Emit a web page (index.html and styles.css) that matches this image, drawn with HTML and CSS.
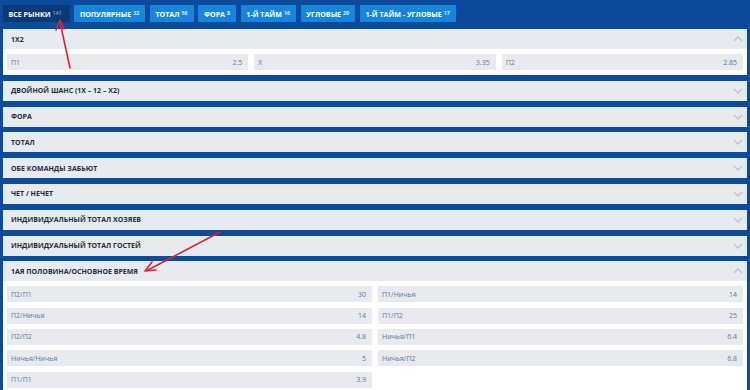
FILE: index.html
```html
<!DOCTYPE html>
<html lang="ru">
<head>
  <meta charset="UTF-8" />
  <meta name="viewport" content="width=device-width, initial-scale=1.0" />
  <title>Рынки</title>
  <link rel="stylesheet" href="styles.css">
</head>
<body>
  <div class="page">
    <nav class="tabs">
      <a class="tab active">Все рынки <sup>141</sup></a>
      <a class="tab">Популярные <sup>32</sup></a>
      <a class="tab">Тотал <sup>56</sup></a>
      <a class="tab">Фора <sup>8</sup></a>
      <a class="tab">1-й тайм <sup>16</sup></a>
      <a class="tab">Угловые <sup>29</sup></a>
      <a class="tab">1-й тайм - угловые <sup>17</sup></a>
    </nav>

    <div class="markets">
      <section class="market">
        <div class="market-head">
          <span>1X2</span>
          <svg class="chevron" viewBox="0 0 10 6"><polyline points="1,5 5,1 9,5" /></svg>
        </div>
        <div class="market-body cols-3">
          <div class="odd"><span>П1</span><span>2.5</span></div>
          <div class="odd"><span>X</span><span>3.35</span></div>
          <div class="odd"><span>П2</span><span>2.85</span></div>
        </div>
      </section>

      <section class="market">
        <div class="market-head">
          <span>Двойной шанс (1X – 12 – X2)</span>
          <svg class="chevron" viewBox="0 0 10 6"><polyline points="1,1 5,5 9,1" /></svg>
        </div>
      </section>
      <section class="market">
        <div class="market-head">
          <span>Фора</span>
          <svg class="chevron" viewBox="0 0 10 6"><polyline points="1,1 5,5 9,1" /></svg>
        </div>
      </section>
      <section class="market">
        <div class="market-head">
          <span>Тотал</span>
          <svg class="chevron" viewBox="0 0 10 6"><polyline points="1,1 5,5 9,1" /></svg>
        </div>
      </section>
      <section class="market">
        <div class="market-head">
          <span>Обе команды забьют</span>
          <svg class="chevron" viewBox="0 0 10 6"><polyline points="1,1 5,5 9,1" /></svg>
        </div>
      </section>
      <section class="market">
        <div class="market-head">
          <span>Чет / Нечет</span>
          <svg class="chevron" viewBox="0 0 10 6"><polyline points="1,1 5,5 9,1" /></svg>
        </div>
      </section>
      <section class="market">
        <div class="market-head">
          <span>Индивидуальный тотал хозяев</span>
          <svg class="chevron" viewBox="0 0 10 6"><polyline points="1,1 5,5 9,1" /></svg>
        </div>
      </section>
      <section class="market">
        <div class="market-head">
          <span>Индивидуальный тотал гостей</span>
          <svg class="chevron" viewBox="0 0 10 6"><polyline points="1,1 5,5 9,1" /></svg>
        </div>
      </section>

      <section class="market">
        <div class="market-head">
          <span>1ая половина/основное время</span>
          <svg class="chevron" viewBox="0 0 10 6"><polyline points="1,5 5,1 9,5" /></svg>
        </div>
        <div class="market-body cols-2">
          <div class="odd"><span>П2/П1</span><span>30</span></div>
          <div class="odd"><span>П1/Ничья</span><span>14</span></div>
          <div class="odd"><span>П2/Ничья</span><span>14</span></div>
          <div class="odd"><span>П1/П2</span><span>25</span></div>
          <div class="odd"><span>П2/П2</span><span>4.8</span></div>
          <div class="odd"><span>Ничья/П1</span><span>6.4</span></div>
          <div class="odd"><span>Ничья/Ничья</span><span>5</span></div>
          <div class="odd"><span>Ничья/П2</span><span>6.8</span></div>
          <div class="odd"><span>П1/П1</span><span>3.9</span></div>
        </div>
      </section>
    </div>

    <!-- пометки поверх скриншота -->
    <svg class="arrows" viewBox="0 0 750 390">
      <line x1="70" y1="68" x2="60" y2="22" />
      <polyline points="56,30 60,20 64,29" />
      <line x1="220" y1="232" x2="148" y2="270" />
      <polyline points="152,262 145,271 156,270" />
    </svg>
  </div>
</body>
</html>
```

FILE: styles.css
```css
html, body {
  margin: 0;
  overflow: hidden;
}

body {
  font-family: 'Open Sans', 'Liberation Sans', sans-serif;
  background: #0c4a9c;
}

.page {
  position: relative;
  width: 750px;
  height: 390px;
}

.tabs {
  display: flex;
  gap: 4.8px;
  padding: 5px 3px 7px;
}

.tab {
  display: flex;
  align-items: center;
  height: 17px;
  padding: 0 6px 0 5.5px;
  background: #1685de;
  color: #fff;
  font-size: 7.1px;
  font-weight: 700;
  text-transform: uppercase;
  white-space: nowrap;
}

.tab sup {
  font-size: 5.3px;
  font-weight: 600;
  margin-left: 2px;
  position: relative;
  top: -1px;
}

.tab.active {
  background: #083a7a;
  padding-right: 8px;
}

.tab.active sup {
  color: #7fa6d6;
}

.markets {
  display: flex;
  flex-direction: column;
  gap: 5.8px;
  padding: 0 3px;
}

.market {
  background: #fff;
}

.market-head {
  display: flex;
  justify-content: space-between;
  align-items: center;
  height: 20px;
  padding: 0 4px 0 8px;
  background: #e6ebf0;
  color: #1e2c3c;
  font-size: 7px;
  font-weight: 700;
  text-transform: uppercase;
}

.chevron {
  width: 10px;
  height: 6px;
  fill: none;
  stroke: #b7c2cd;
  stroke-width: 1.3;
}

.market-body {
  display: grid;
  column-gap: 6px;
  row-gap: 5.3px;
  padding: 5px 4px;
}

.cols-3 {
  grid-template-columns: repeat(3, 1fr);
}

.cols-2 {
  grid-template-columns: repeat(2, 1fr);
}

.odd {
  display: flex;
  justify-content: space-between;
  align-items: center;
  height: 16px;
  padding: 0 6px 0 4px;
  background: #e7ebf0;
  color: #55769a;
  font-size: 7px;
}

.arrows {
  position: absolute;
  left: 0;
  top: 0;
  width: 750px;
  height: 390px;
  fill: none;
  stroke: #d9262a;
  stroke-width: 1.6;
  stroke-linecap: round;
  stroke-linejoin: round;
}
```
